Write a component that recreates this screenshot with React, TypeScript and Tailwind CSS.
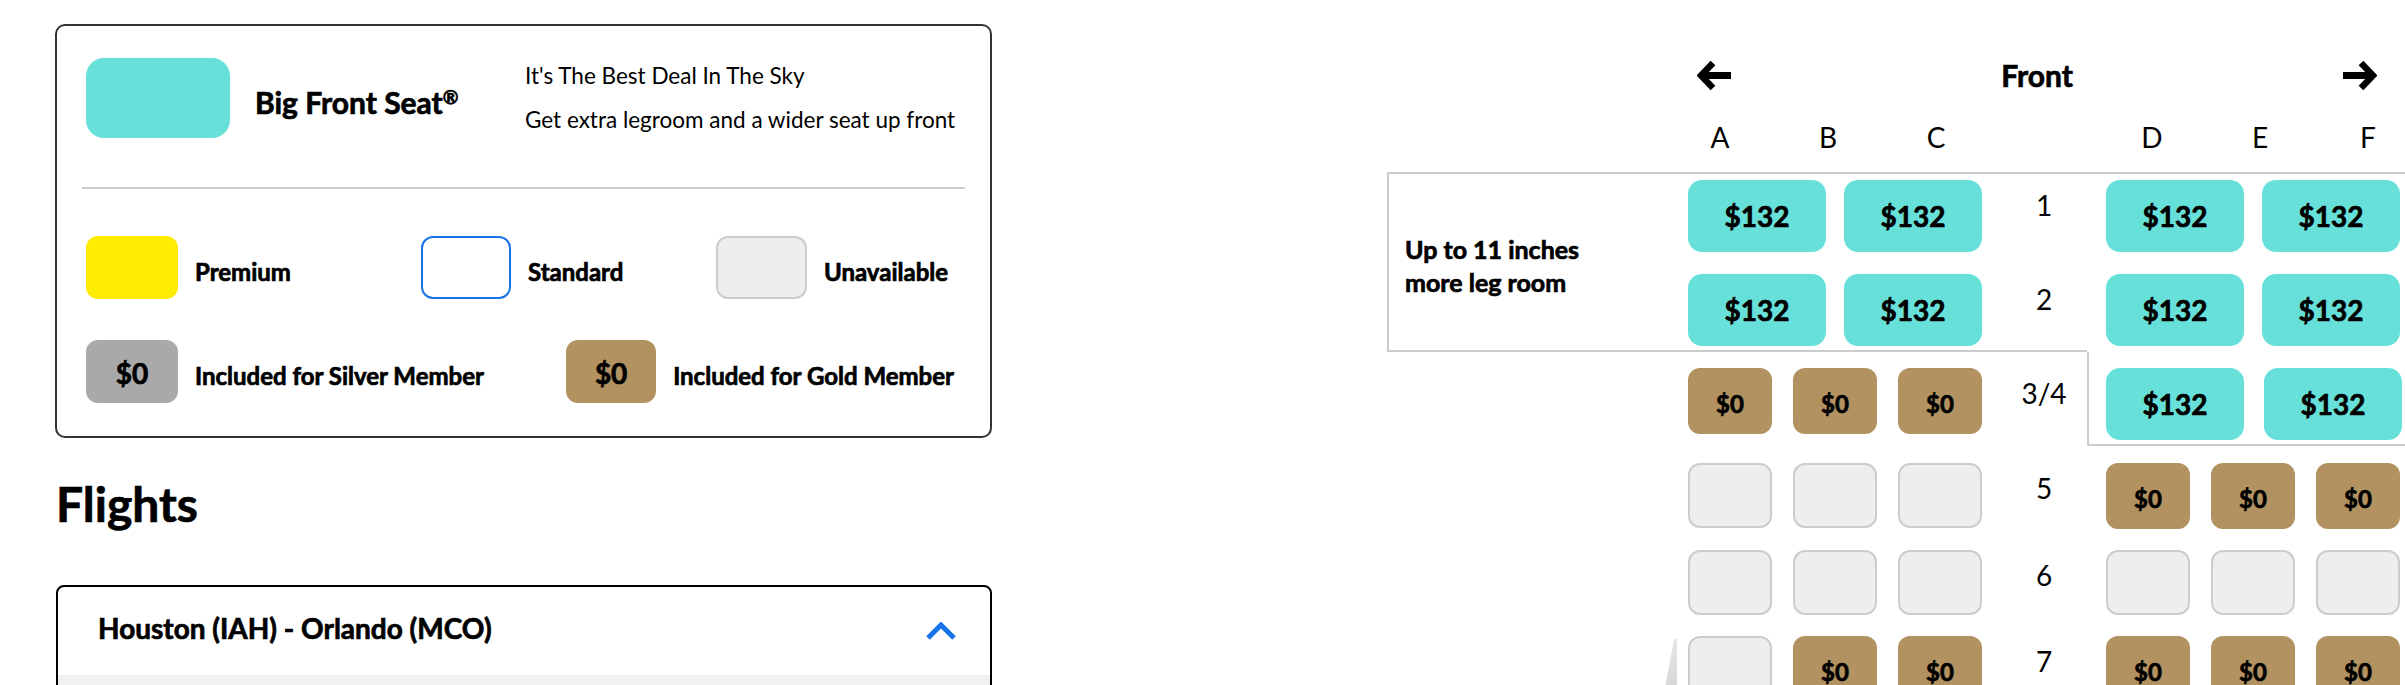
import React from 'react';

// Lato Bold runs a little lighter than the reference face, so bold text gets a hairline stroke
const heavy = 'font-bold [-webkit-text-stroke:0.7px_#000]';

const BigSeat: React.FC = () => (
  <div className={`w-[138px] h-[72px] rounded-[14px] bg-[#68e0da] flex items-center justify-center text-[28px] leading-none ${heavy}`}>
    $132
  </div>
);

const GoldSeat: React.FC = () => (
  <div className={`w-[84px] h-[66px] rounded-[12px] bg-[#b19260] flex items-center justify-center pt-[6px] text-[24px] leading-none ${heavy}`}>
    $0
  </div>
);

const EmptySeat: React.FC = () => (
  <div className="w-[84px] h-[65px] rounded-[12px] bg-[#eeeeee] border-2 border-[#cccccc]"></div>
);

const RowNumber: React.FC<{ label: string }> = ({ label }) => (
  <div className="w-[124px] flex justify-center pt-[11px] text-[28px] leading-none">{label}</div>
);

const Arrow: React.FC<{ dir: 'left' | 'right' }> = ({ dir }) => (
  <svg width="36" height="31" viewBox="0 0 36 31" className={dir === 'right' ? 'rotate-180' : ''}>
    <path d="M16 3 L4 15.5 L16 28" fill="none" stroke="#000" strokeWidth="6.5" strokeLinejoin="miter" />
    <path d="M6 15.5 H34" fill="none" stroke="#000" strokeWidth="7" />
  </svg>
);

type SeatKind = 'gold' | 'empty';

const SeatGroup: React.FC<{ seats: SeatKind[] }> = ({ seats }) => (
  <div className="w-[294px] flex justify-between">
    {seats.map((s, i) => (s === 'gold' ? <GoldSeat key={i} /> : <EmptySeat key={i} />))}
  </div>
);

const LegendItem: React.FC<{ swatch: React.ReactNode; label: string; className?: string }> = ({ swatch, label, className }) => (
  <div className={`flex items-center ${className || ''}`}>
    {swatch}
    <span className={`ml-[17px] pt-[8px] text-[24px] leading-none ${heavy}`}>{label}</span>
  </div>
);

export default function App() {
  const rows: { num: string; left: SeatKind[]; right: SeatKind[] }[] = [
    { num: '5', left: ['empty', 'empty', 'empty'], right: ['gold', 'gold', 'gold'] },
    { num: '6', left: ['empty', 'empty', 'empty'], right: ['empty', 'empty', 'empty'] },
    { num: '7', left: ['empty', 'gold', 'gold'], right: ['gold', 'gold', 'gold'] },
  ];

  return (
    <div className="w-[2405px] h-[685px] overflow-hidden bg-white flex font-['Lato',sans-serif] text-black">
      {/* Left column: legend + flights */}
      <div className="ml-[55px] w-[937px] shrink-0 pt-[24px]">
        <div className="border-2 border-[#333333] rounded-[10px] h-[414px] px-[25px] pt-[32px]">
          <div className="h-[80px] flex items-center ml-[4px]">
            <div className="w-[144px] h-[80px] rounded-[18px] bg-[#68e0da]"></div>
            <div className={`ml-[25px] w-[270px] pt-[8px] text-[30px] leading-none ${heavy}`}>
              Big Front Seat<span className="text-[19px] align-top leading-none">®</span>
            </div>
            <div className="text-[22.5px] leading-[44px]">
              <div>It's The Best Deal In The Sky</div>
              <div>Get extra legroom and a wider seat up front</div>
            </div>
          </div>

          <div className="mt-[49px] h-[2px] bg-[#cccccc]"></div>

          <div className="mt-[47px] ml-[4px] flex items-center">
            <LegendItem
              className="w-[335px]"
              swatch={<div className="w-[92px] h-[63px] rounded-[12px] bg-[#ffec00]"></div>}
              label="Premium"
            />
            <LegendItem
              className="w-[295px]"
              swatch={<div className="w-[90px] h-[63px] rounded-[12px] border-2 border-[#1a73e8] bg-white"></div>}
              label="Standard"
            />
            <LegendItem
              swatch={<div className="w-[91px] h-[63px] rounded-[12px] border-2 border-[#cccccc] bg-[#eeeeee]"></div>}
              label="Unavailable"
            />
          </div>

          <div className="mt-[41px] ml-[4px] w-[868px] flex items-center justify-between">
            <LegendItem
              swatch={
                <div className={`w-[92px] h-[63px] rounded-[12px] bg-[#a9a9a9] flex items-center justify-center pt-[3px] text-[28px] leading-none ${heavy}`}>
                  $0
                </div>
              }
              label="Included for Silver Member"
            />
            <LegendItem
              swatch={
                <div className={`w-[90px] h-[63px] rounded-[12px] bg-[#b19260] flex items-center justify-center pt-[3px] text-[28px] leading-none ${heavy}`}>
                  $0
                </div>
              }
              label="Included for Gold Member"
            />
          </div>
        </div>

        <h2 className={`mt-[42px] ml-[1px] text-[48px] leading-none ${heavy}`}>Flights</h2>

        <div className="mt-[57px] ml-[1px] border-2 border-black rounded-[8px] h-[200px] overflow-hidden">
          <div className="flex items-start justify-between pl-[40px] pr-[34px] pt-[27px] pb-[33px]">
            <span className={`text-[28px] leading-none ${heavy}`}>Houston (IAH) - Orlando (MCO)</span>
            <svg width="30" height="18" viewBox="0 0 30 18" className="mt-[8px]">
              <path d="M2 16 L15 3 L28 16" fill="none" stroke="#1a73e8" strokeWidth="5" />
            </svg>
          </div>
          <div className="h-[40px] bg-gradient-to-b from-[#f0f0f0] to-[#f7f7f7]"></div>
        </div>
      </div>

      {/* Right column: seat map */}
      <div className="ml-[395px] w-[1018px] shrink-0 pt-[55px]">
        <div className="h-[40px] flex items-center">
          <div className="w-[301px] shrink-0"></div>
          <div className="w-[712px] grid grid-cols-[1fr_auto_1fr] items-center pl-[9px] pr-[23px]">
            <div className="flex justify-start">
              <Arrow dir="left" />
            </div>
            <div className={`text-[30px] leading-none ${heavy}`}>Front</div>
            <div className="flex justify-end">
              <Arrow dir="right" />
            </div>
          </div>
        </div>

        <div className="mt-[28px] flex text-[28px] leading-none">
          <div className="w-[279px] shrink-0"></div>
          {['A', 'B', 'C', '', 'D', 'E', 'F'].map((l, i) => (
            <div key={i} className="w-[108px] shrink-0 text-center">
              {l}
            </div>
          ))}
        </div>

        {/* Big Front Seat rows */}
        <div className="mt-[21px] border-t-2 border-l-2 border-[#cccccc] flex pt-[6px] pb-[4px]">
          <div className={`w-[299px] shrink-0 flex items-center pl-[16px] pt-[6px] text-[25px] leading-[33px] ${heavy}`}>
            <div>
              Up to 11 inches
              <br />
              more leg room
            </div>
          </div>
          <div className="flex flex-col gap-[22px]">
            {['1', '2'].map((n) => (
              <div key={n} className="flex">
                <div className="w-[294px] flex justify-between">
                  <BigSeat />
                  <BigSeat />
                </div>
                <RowNumber label={n} />
                <div className="w-[294px] flex justify-between">
                  <BigSeat />
                  <BigSeat />
                </div>
              </div>
            ))}
          </div>
        </div>
        <div className="w-[700px] h-[2px] bg-[#cccccc]"></div>

        {/* Row 3/4 */}
        <div className="flex">
          <div className="w-[301px] shrink-0"></div>
          <div className="mt-[16px]">
            <SeatGroup seats={['gold', 'gold', 'gold']} />
          </div>
          <div className="w-[105px] shrink-0 flex justify-center pl-[19px] pt-[27px] text-[28px] leading-none">3/4</div>
          <div className="flex-1 border-l-2 border-b-2 border-[#cccccc] pl-[17px] pt-[16px] pb-[4px] flex gap-[20px]">
            <BigSeat />
            <BigSeat />
          </div>
        </div>

        {/* Standard rows */}
        <div className="mt-[17px] flex flex-col gap-[21px]">
          {rows.map((r) => (
            <div key={r.num} className="flex">
              <div className="w-[301px] shrink-0 flex justify-end pr-[11px]">
                {r.num === '7' && (
                  <svg width="14" height="60" viewBox="0 0 14 60" className="mt-[3px]">
                    <defs>
                      <linearGradient id="wing" x1="0" y1="0" x2="0" y2="1">
                        <stop offset="0" stopColor="#e6e6e6" />
                        <stop offset="1" stopColor="#d4d4d4" />
                      </linearGradient>
                    </defs>
                    <polygon points="11,0 14,0 14,60 0,60" fill="url(#wing)" />
                  </svg>
                )}
              </div>
              <SeatGroup seats={r.left} />
              <RowNumber label={r.num} />
              <SeatGroup seats={r.right} />
            </div>
          ))}
        </div>
      </div>
    </div>
  );
}
